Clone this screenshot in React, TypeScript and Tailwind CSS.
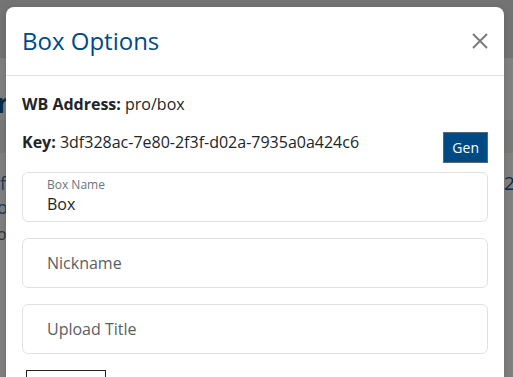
import React from "react";

function Field({ label, value, placeholder }: { label?: string; value?: string; placeholder?: string }) {
  if (label) {
    return (
      <div className="h-[50px] rounded-md border border-[#dee2e6] pl-[24px] pt-[4px] box-border">
        <div className="text-[12px] leading-[16px] text-[#6c757d]">{label}</div>
        <div className="text-[16px] leading-[22px] text-[#212529]">{value}</div>
      </div>
    );
  }
  return (
    <div className="h-[50px] rounded-md border border-[#dee2e6] pl-[24px] flex items-center box-border">
      <span className="text-[16px] leading-6 text-[#5a5e63]">{placeholder}</span>
    </div>
  );
}

export default function App() {
  return (
    <div className="relative w-[513px] h-[377px] overflow-hidden bg-[#808080] font-['Open_Sans',sans-serif]">
      {/* dimmed page behind the overlay */}
      <div className="absolute left-0 top-0 w-full h-[58px] bg-[#737373]" />
      <div className="absolute left-0 top-[120px] w-full h-[33px] bg-[#797979]" />
      <span className="absolute left-[-3px] top-[88px] text-[26px] leading-[30px] font-bold text-[#0d2b48]">n</span>
      <span className="absolute left-[0px] top-[172px] text-[18px] leading-[22px] text-[#1d3c5c]">f</span>
      <span className="absolute left-[-3px] top-[196px] text-[18px] leading-[22px] text-[#1d3c5c]">or</span>
      <span className="absolute left-[-3px] top-[223px] text-[16px] leading-[22px] text-[#333]">ol</span>
      <span className="absolute left-[504px] top-[172px] text-[19px] leading-[22px] text-[#0d2b48]">2</span>

      {/* modal */}
      <div className="absolute left-[6px] top-[7px] w-[498px] h-[400px] bg-white rounded-lg shadow-[0_2px_8px_rgba(0,0,0,0.15)]">
        <div className="flex items-center justify-between px-4 py-4 border-b border-[#dee2e6]">
          <h5 className="text-[24px] leading-9 text-[#004a84]">Box Options</h5>
          <svg width="16" height="16" viewBox="0 0 16 16">
            <path d="M1 1 L15 15 M15 1 L1 15" stroke="#7c7c7c" strokeWidth="2" fill="none" />
          </svg>
        </div>
        <div className="px-4 pt-4 text-[#212529]">
          <p className="text-[16px] leading-6">
            <span className="font-bold">WB Address:</span> pro/box
          </p>
          <div className="mt-[14px] flex items-start justify-between">
            <p className="text-[16px] leading-6">
              <span className="font-bold">Key:</span> 3df328ac-7e80-2f3f-d02a-7935a0a424c6
            </p>
            <button className="mt-[2px] h-[31px] px-[8px] bg-[#004a84] border border-[#5c6670] text-white text-[14px] leading-[21px]">
              Gen
            </button>
          </div>
          <div className="mt-[9px] flex flex-col gap-4">
            <Field label="Box Name" value="Box" />
            <Field placeholder="Nickname" />
            <Field placeholder="Upload Title" />
            <div className="ml-[4px] w-[80px] h-[30px] border-[1.5px] border-[#222]" />
          </div>
        </div>
      </div>
    </div>
  );
}
